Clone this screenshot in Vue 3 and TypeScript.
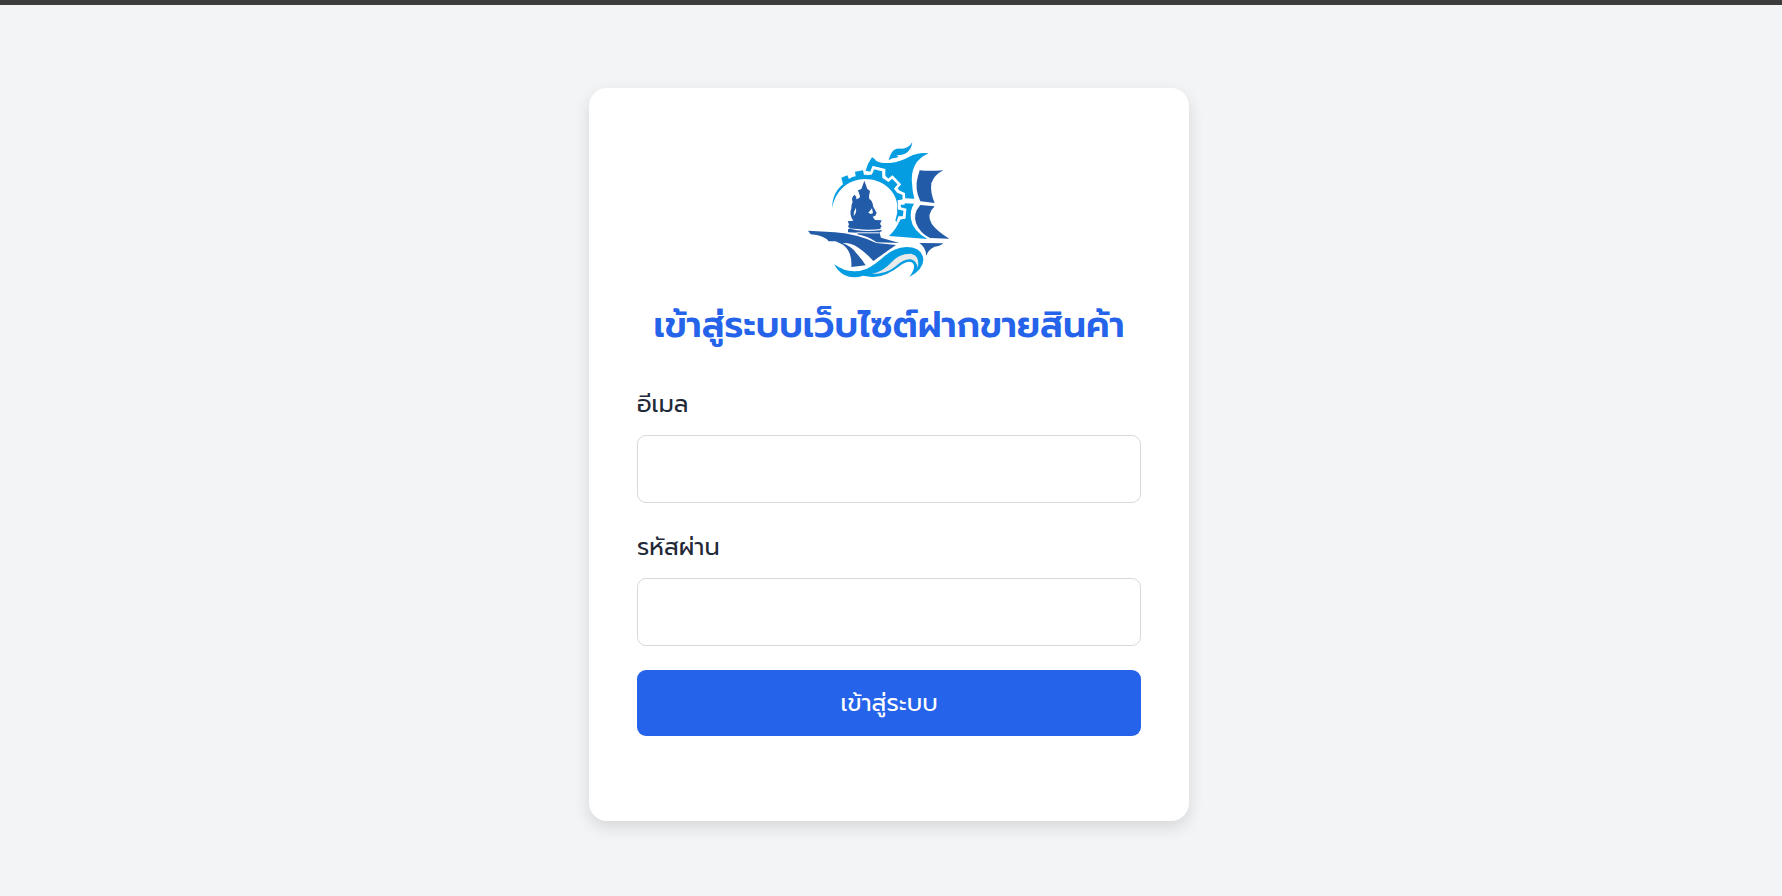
<script setup lang="ts">
import { ref } from 'vue'

const email = ref('')
const password = ref('')
</script>

<template>
  <div class="page">
    <main class="card">
      <svg class="logo" viewBox="27 0 540 480" aria-hidden="true">
        <g class="sky">
          <path d="M127 236C126 205 137 180 159 163L154 143L172 136L177 147Q187 140 197 139L195 125L219 121L222 135L243 130L250 113L280 121L281 142L295 151L307 141L328 163L317 176L324 185L341 192L341 214L328 214L328 235L345 239L341 264L328 264L322 275L316 273Q324 250 322 226C318 180 275 147 225 147C170 147 132 190 127 236Z" />
          <path d="M246 82Q254 86 258 92Q270 101 300 99Q332 95 358 80Q386 66 416 70Q386 83 374 107Q363 130 366 160Q367 186 373 206L344 205L340 188L326 180L323 172L332 164L308 137L296 147L286 137L286 117L251 109L243 125L227 122Q232 101 246 82Z" />
          <path d="M344 220L372 221Q359 241 363 268Q368 302 412 327Q356 322 297 318Q322 294 329 270L346 264L348 239L332 236L331 224L344 224Z" />
          <path d="M296 91Q301 69 312 60Q320 55 337 56Q357 54 367 36Q364 62 345 71Q334 76 320 76L326 81L315 84Q307 83 296 91Z" />
          <path d="M133 403Q178 437 231 416Q253 406 283 379Q313 352 349 351Q397 351 400 389Q400 418 358 441Q378 414 370 401Q360 388 333 405Q284 444 245 441L219 437Q189 447 163 435Q141 423 133 403Z" />
        </g>
        <path class="foam" d="M246 432Q281 423 306 395Q331 370 363 371Q391 378 383 414Q380 392 362 388Q342 386 318 408Q290 432 246 432Z" />
        <path class="gear-gap" d="M229 132L243 130L250 113L280 121L281 142L295 151L307 141L328 163L317 176L324 185L341 192L342 212L327 214L328 235L345 239L342 263L328 263L324 275" />
        <g class="navy">
          <path d="M54 302L135 307Q201 312 259 339L318 345Q292 363 250 393Q228 368 202 351Q183 338 158 339Q185 350 198 368Q216 388 227 406L184 411Q187 365 159 344L137 334L116 334Q102 316 62 313Z" />
          <path d="M174 307L174 298L180 295L174 290L177 283L173 274L190 272Q176 254 184 235Q184 223 188 216Q182 203 194 194Q200 199 199 208L208 204L210 199L204 181L214 177L223 152L232 177L240 183L237 199L238 207Q248 212 249 229L260 249L256 257L248 260L255 270L275 271L270 282L275 289L271 294L276 303L268 307L273 323L328 339L260 337Q233 318 202 313L202 308Z" />
          <path d="M389 121Q419 124 460 121Q433 134 424 160Q420 187 434 219L391 214Q373 178 383 142Z" />
          <path d="M391 225L434 229Q408 253 425 281Q438 301 478 326L420 324Q390 309 379 281Q367 252 391 225Z" />
          <path d="M388 339L460 340Q451 349 434 350Q413 360 409 378Q408 352 388 339Z" />
        </g>
        <g class="cutout">
          <path d="M191 258Q202 246 197 234L192 247Z" />
          <path d="M235 248L246 235L249 249L242 252Z" />
          <path d="M172 295L202 297Q238 302 276 296L276 300Q235 306 202 301Z" />
          <path d="M200 307H267V310H200Z" />
        </g>
      </svg>
      <h1 class="title">เข้าสู่ระบบเว็บไซต์ฝากขายสินค้า</h1>
      <form class="form" @submit.prevent>
        <div class="field">
          <label for="email">อีเมล</label>
          <input id="email" v-model="email" type="email" autocomplete="username">
        </div>
        <div class="field">
          <label for="password">รหัสผ่าน</label>
          <input id="password" v-model="password" type="password" autocomplete="current-password">
        </div>
        <button type="submit">เข้าสู่ระบบ</button>
      </form>
    </main>
  </div>
</template>

<style>
body {
  margin: 0;
  background: #f3f4f6;
}
</style>

<style scoped>
.page {
  box-sizing: border-box;
  min-height: 100vh;
  padding: 83px 4px 72px 0;
  border-top: 5px solid #3c3c3c;
  background: #f3f4f6;
  color: #1f2937;
  font-family: Prompt, Kanit, "Noto Sans Thai", "Noto Sans", sans-serif;
}

.card {
  box-sizing: border-box;
  width: 100%;
  max-width: 600px;
  margin: 0 auto;
  padding: 42px 48px 85px;
  border-radius: 18px;
  background: #fff;
  box-shadow: 0 6px 16px rgb(0 0 0 / 12%);
}

.logo {
  display: block;
  width: 180px;
  height: 160px;
  margin: 0 auto;
}

.sky {
  fill: #059de2;
}

.navy {
  fill: #225ba8;
}

.foam {
  fill: #e7e9eb;
}

.cutout {
  fill: #fff;
}

.gear-gap {
  fill: none;
  stroke: #fff;
  stroke-width: 8;
}

.title {
  margin: 8px 0 32px;
  color: #2563eb;
  font-size: 36px;
  font-weight: 600;
  line-height: 54px;
  text-align: center;
  white-space: nowrap;
}

.form {
  display: grid;
  gap: 24px;
}

.field {
  display: grid;
  gap: 11px;
}

label {
  font-size: 24px;
  line-height: 40px;
}

input {
  box-sizing: border-box;
  width: 100%;
  height: 68px;
  padding: 16px;
  border: 1px solid #d9d9d9;
  border-radius: 9px;
  background: #fff;
  color: inherit;
  font: inherit;
  font-size: 24px;
}

button {
  height: 66px;
  padding: 0 24px;
  border: 0;
  border-radius: 9px;
  background: #2563eb;
  color: #fff;
  font-family: inherit;
  font-size: 24px;
  line-height: 36px;
  cursor: pointer;
}
</style>
